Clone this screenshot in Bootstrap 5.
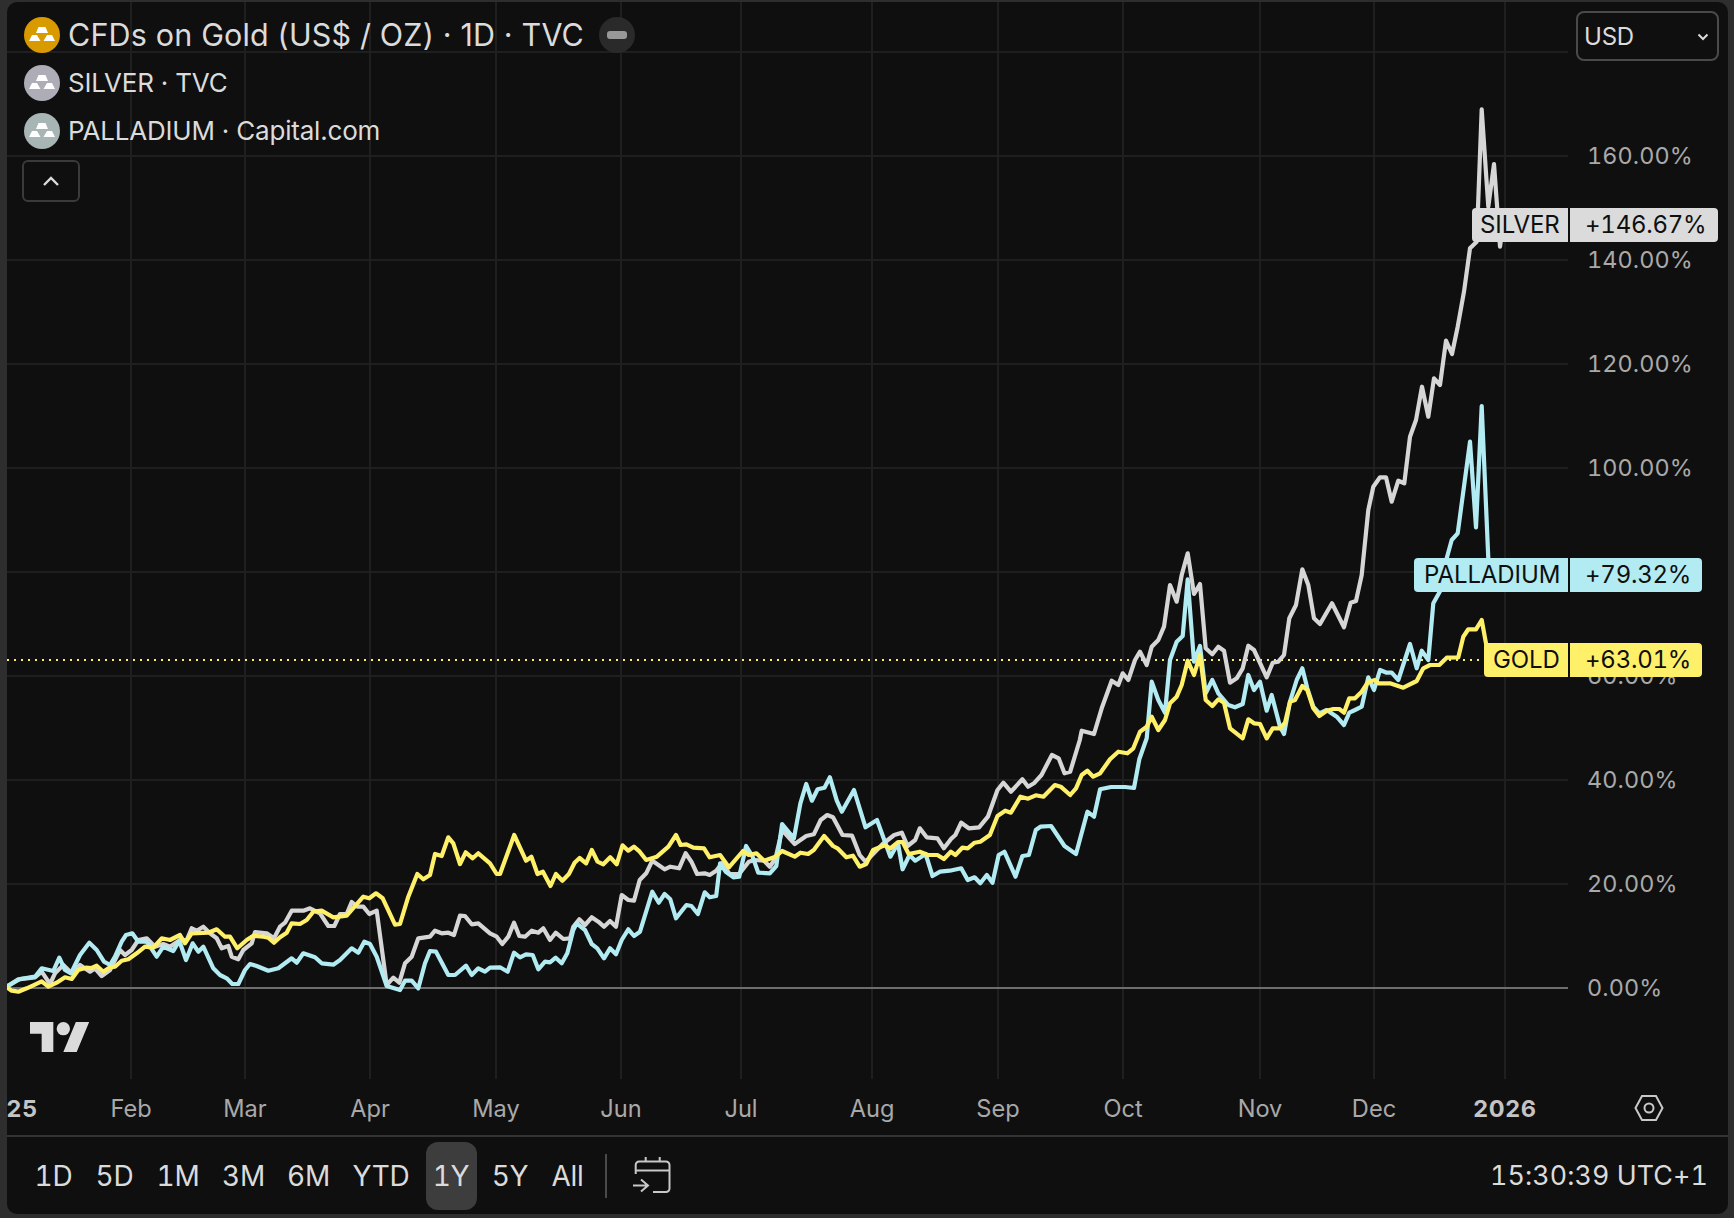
<!DOCTYPE html>
<html lang="en" data-bs-theme="dark">
<head>
<meta charset="utf-8">
<title>CFDs on Gold</title>
<link href="https://cdn.jsdelivr.net/npm/bootstrap@5.3.0/dist/css/bootstrap.min.css" rel="stylesheet">
<style>
html,body{height:1218px;overflow:hidden;}
body{background:#2e2e2e;padding:2px 6px 4px 7px;font-family:Inter,"Liberation Sans",sans-serif;color:#dbdbdb;}
.tv-panel{background:#0f0f0f;border-radius:10px;height:1212px;overflow:hidden;position:relative;}
.tv-chart{height:1077px;position:relative;}
.tv-svg{position:absolute;left:0;top:0;display:block;}
.tv-legend{position:absolute;left:17px;top:9px;}
.tv-row{height:48px;font-size:26px;letter-spacing:-.2px;gap:8px;line-height:1;white-space:nowrap;}
.tv-row-main{font-size:30.5px;letter-spacing:.16px;}
.tv-minus{width:36px;height:36px;border-radius:50%;background:#2a2a2a;margin-left:7px;}
.tv-minus i{display:block;width:20px;height:8px;border-radius:3px;background:#999;}
.tv-collapse{width:58px;height:42px;margin-top:5px;margin-left:-2px;padding:0;border:2px solid #3a3a3a;border-radius:6px;background:transparent;}
.tv-usd{position:absolute;left:1569px;top:9px;width:143px;height:50px;border:2px solid #4a4a4a;border-radius:8px;background:#0f0f0f;color:#dbdbdb;font-size:24px;padding:2px 8px 0 6px;letter-spacing:-.2px;}
.tv-ylab{position:absolute;left:1580px;font-size:23.4px;line-height:30px;color:#a9a9a9;transform:translateY(-50%);letter-spacing:.1px;font-variant-numeric:tabular-nums;}
.tv-tag{position:absolute;height:34px;display:flex;gap:2px;font-size:24px;line-height:34px;color:#0f0f0f;}
.tv-tag span{display:block;white-space:nowrap;letter-spacing:-.1px;}
.tv-tag .tv-tagl{border-radius:4px 0 0 4px;width:var(--l);padding-left:var(--p);text-align:left;}
.tv-tag .tv-tagv{border-radius:0 4px 4px 0;width:var(--v);padding-left:15px;text-align:left;letter-spacing:-.25px;font-variant-numeric:tabular-nums;}
.tv-axis{height:58px;position:relative;border-bottom:2px solid #333;}
.tv-tick{position:absolute;top:15px;font-size:23.6px;line-height:30px;color:#a9a9a9;transform:translateX(-50%);}
.tv-year{font-weight:700;font-size:23.5px;color:#c4c4c4;letter-spacing:.7px;}
.tv-hex{position:absolute;left:1627px;top:15px;}
.tv-tools{height:77px;padding-left:20.5px;padding-right:20px;gap:7px;}
.tv-range{font-size:28px;letter-spacing:-.3px;line-height:1;height:68px;padding:0;border:0;border-radius:12px;color:#dbdbdb;background:transparent;--bs-btn-hover-color:#dbdbdb;font-variant-numeric:tabular-nums;}
.tv-range.active,.tv-range.active:hover{background:#3d3d3d;color:#dbdbdb;}
.tv-range:nth-child(1){width:52px;}
.tv-range:nth-child(2){width:56px;}
.tv-range:nth-child(3){width:57px;}
.tv-range:nth-child(4){width:60px;}
.tv-range:nth-child(5){width:56px;}
.tv-range:nth-child(6){width:75px;}
.tv-range:nth-child(7){width:51px;}
.tv-range:nth-child(8){width:53px;}
.tv-range:nth-child(9){width:48px;}
.tv-sep{width:2px;height:44px;background:#4a4a4a;margin-left:6.5px;}
.tv-cal{margin-left:9px;}
.tv-clock{font-size:26.8px;letter-spacing:.1px;font-variant-numeric:tabular-nums;}
</style>
</head>
<body>
<div class="tv-panel d-flex flex-column">
  <div class="tv-chart">
    <svg class="tv-svg" id="plot" width="1721" height="1077" viewBox="7 2 1721 1077" xmlns="http://www.w3.org/2000/svg">
      <g stroke="#1f1f1f" stroke-width="2">
        <path d="M7 52H1568M7 156H1568M7 260H1568M7 364H1568M7 468H1568M7 572H1568M7 676H1568M7 780H1568M7 884H1568"/>
        <path d="M131 2V1079M245 2V1079M370 2V1079M496 2V1079M621 2V1079M741 2V1079M872 2V1079M998 2V1079M1123 2V1079M1260 2V1079M1374 2V1079M1505 2V1079"/>
      </g>
      <path d="M7 988H1568" stroke="#6e6e6e" stroke-width="2"/>
      <path d="M7 660H1490" stroke="#fff06a" stroke-width="2" stroke-dasharray="2 5"/>
    </svg>

    <div class="tv-ylab" style="top:154px">160.00%</div>
    <div class="tv-ylab" style="top:258px">140.00%</div>
    <div class="tv-ylab" style="top:362px">120.00%</div>
    <div class="tv-ylab" style="top:466px">100.00%</div>
    <div class="tv-ylab" style="top:674px">60.00%</div>
    <div class="tv-ylab" style="top:778px">40.00%</div>
    <div class="tv-ylab" style="top:882px">20.00%</div>
    <div class="tv-ylab" style="top:986px">0.00%</div>

    <div class="tv-tag" style="left:1465px;top:206px;--l:96px;--v:148px;--p:8px"><span class="tv-tagl" style="background:#dbdbdb">SILVER</span><span class="tv-tagv" style="background:#dbdbdb">+146.67%</span></div>
    <div class="tv-tag" style="left:1407px;top:556px;--l:154px;--v:132px;--p:10px"><span class="tv-tagl" style="background:#b2ebf2">PALLADIUM</span><span class="tv-tagv" style="background:#b2ebf2">+79.32%</span></div>
    <div class="tv-tag" style="left:1477px;top:641px;--l:84px;--v:132px;--p:9px"><span class="tv-tagl" style="background:#fff06a">GOLD</span><span class="tv-tagv" style="background:#fff06a">+63.01%</span></div>

    <div class="tv-legend">
      <div class="tv-row tv-row-main d-flex align-items-center">
        <svg width="36" height="36" viewBox="0 0 36 36"><circle cx="18" cy="18" r="18" fill="#d99a00"/><path fill="#fff" d="M14.5 10h7L24 16H12zM8 18h5l3.5 6H5zM23 18h5l3 6H19.5z"/></svg>
        <span>CFDs on Gold (US$ / OZ) · 1D · TVC</span>
        <span class="tv-minus d-flex align-items-center justify-content-center"><i></i></span>
      </div>
      <div class="tv-row d-flex align-items-center">
        <svg width="36" height="36" viewBox="0 0 36 36"><circle cx="18" cy="18" r="18" fill="#adadb8"/><path fill="#fff" d="M14.5 10h7L24 16H12zM8 18h5l3.5 6H5zM23 18h5l3 6H19.5z"/></svg>
        <span>SILVER · TVC</span>
      </div>
      <div class="tv-row d-flex align-items-center">
        <svg width="36" height="36" viewBox="0 0 36 36"><circle cx="18" cy="18" r="18" fill="#a8b5b5"/><path fill="#fff" d="M14.5 10h7L24 16H12zM8 18h5l3.5 6H5zM23 18h5l3 6H19.5z"/></svg>
        <span>PALLADIUM · Capital.com</span>
      </div>
      <button type="button" class="tv-collapse btn d-flex align-items-center justify-content-center" aria-label="Collapse">
        <svg width="18" height="12" viewBox="0 0 18 12"><path d="M2 10l7-7 7 7" fill="none" stroke="#dbdbdb" stroke-width="2.4"/></svg>
      </button>
    </div>

    <button type="button" class="tv-usd btn d-flex align-items-center justify-content-between">
      <span>USD</span>
      <svg width="12" height="8" viewBox="0 0 12 8"><path d="M1.5 1.5L6 6l4.5-4.5" fill="none" stroke="#dbdbdb" stroke-width="2"/></svg>
    </button>

    <svg class="tv-svg" style="left:23px;top:1020px" width="60" height="30" viewBox="0 4 36 18" xmlns="http://www.w3.org/2000/svg"><path fill="#dbdbdb" d="M14 22H7V11H0V4h14v18zM28 22h-8l7.500-18h8L28 22z"/><circle fill="#dbdbdb" cx="20" cy="8" r="4"/></svg>
  </div>

  <div class="tv-axis">
    <div class="tv-tick tv-year" style="left:15px">25</div>
    <div class="tv-tick" style="left:124px">Feb</div>
    <div class="tv-tick" style="left:238px">Mar</div>
    <div class="tv-tick" style="left:363px">Apr</div>
    <div class="tv-tick" style="left:489px">May</div>
    <div class="tv-tick" style="left:614px">Jun</div>
    <div class="tv-tick" style="left:734px">Jul</div>
    <div class="tv-tick" style="left:865px">Aug</div>
    <div class="tv-tick" style="left:991px">Sep</div>
    <div class="tv-tick" style="left:1116px">Oct</div>
    <div class="tv-tick" style="left:1253px">Nov</div>
    <div class="tv-tick" style="left:1367px">Dec</div>
    <div class="tv-tick tv-year" style="left:1498px">2026</div>
    <svg class="tv-hex" width="30" height="28" viewBox="0 0 30 28"><path d="M1.500 14L8 2h14l6.500 12L22 26H8z" fill="none" stroke="#c8c8c8" stroke-width="2"/><circle cx="15" cy="14" r="4.500" fill="none" stroke="#c8c8c8" stroke-width="2"/></svg>
  </div>

  <div class="tv-tools d-flex align-items-center">
    <button type="button" class="btn tv-range">1D</button>
    <button type="button" class="btn tv-range">5D</button>
    <button type="button" class="btn tv-range">1M</button>
    <button type="button" class="btn tv-range">3M</button>
    <button type="button" class="btn tv-range">6M</button>
    <button type="button" class="btn tv-range">YTD</button>
    <button type="button" class="btn tv-range active">1Y</button>
    <button type="button" class="btn tv-range">5Y</button>
    <button type="button" class="btn tv-range">All</button>
    <div class="tv-sep"></div>
    <svg class="tv-cal" width="56" height="50" viewBox="0 0 56 50"><path fill="none" stroke="#c8c8c8" stroke-width="2" d="M12.700 23V14a3.500 3.500 0 0 1 3.500-3.500H43a3.500 3.500 0 0 1 3.500 3.500V37.500A3.500 3.500 0 0 1 43 41H30M12.700 19.500H46.500M22.700 6V10.500M36.700 6V10.500M10 34.500H25M18 28.500L25 34.500L18 40.500"/></svg>
    <div class="tv-clock ms-auto">15:30:39 UTC+1</div>
  </div>
</div>
<script>
var Z6=[0,800,1/3,1/3],Z7=[500,740,1/2.613,1/3],Z8=[1050,520,1/3,1/3],Z9=[1300,90,1/3,1/3],Z3=[1380,540,1/3,1/3],Z10=[490,860,1/3,1/3],P=[0,0,1,1];
var series=[
{c:"#d6d6d6",d:[
[Z6,"20,560 55,538 105,532 125,515 150,552 165,520 190,495 215,520 240,495 270,515 285,505 305,528 330,510 360,450 375,465 395,450 415,420 440,415 465,440 490,432 510,440 540,420 560,420 575,385 590,392 610,380 630,400 650,415 665,445 685,438 695,470 715,478 730,450 755,430 765,396 800,400 822,415 840,380 855,368 875,332 910,332 930,325 960,340 985,378 1003,378 1020,342 1040,342 1055,306 1072,320 1090,320 1108,342 1130,332 1160,555 1180,533 1198,548 1215,490 1235,470 1255,415 1290,410 1305,392 1325,400 1345,398 1362,405 1380,347 1395,348 1415,373 1435,370 1470,400"],
[Z10,"0,220 20,230 37,252 55,230 72,188 88,228 105,230 125,212 145,218 160,205 180,240 197,218 220,237 240,235 250,200 268,178 285,195 305,172 325,185 342,200 360,183 378,200 395,105 415,120 432,122"],
[Z7,"365,420 382,400 398,362 430,388 445,380 468,385 485,340 500,365 515,402 535,400 548,405 565,392 580,370 600,402 625,402 650,365 665,360 690,362 705,380 720,355 737,270 770,312 800,288 820,283 838,240 855,225 870,232 895,285 920,287 940,345 955,365 1000,312 1030,285 1050,278 1065,318 1085,300 1097,265 1115,292 1143,295 1160,325 1180,295 1190,285 1205,248 1225,265 1252,262 1275,230 1300,150 1315,128 1335,155 1365,118 1380,140 1395,130 1415,105 1442,45 1460,55 1475,100 1490,95 1515,0"],
[Z8,"95,632 132,642 155,565 185,482 205,495 218,460 235,480 255,420 270,395 290,435 305,380 325,360 342,320 360,195 380,245 395,165 413,100 432,222 450,192 467,385 487,403 505,380 522,392 540,488 560,475 578,445 595,377 612,390 650,472 668,428 685,425 702,405 718,295 738,255 757,148 775,195 792,295 810,312 846,250 882,322 902,248 918,243 935,165"],
[Z9,"205,1260 220,1190 240,1162 258,1162 275,1235 295,1172 313,1180 330,1040 348,990 366,890 385,980 402,865 420,885 438,752 456,792 473,710 492,605 510,475 530,455 545,58 565,350 582,222 600,470"],
[P,"1503,225"]]},
{c:"#b2ebf2",d:[
[Z6,"20,560 60,537 105,530 125,505 160,513 178,473 195,510 213,520 240,465 268,428 290,450 312,485 330,495 345,470 365,425 378,405 397,400 415,425 440,425 470,470 490,440 520,453 538,422 558,480 578,430 595,455 610,440 640,505 660,525 680,535 697,552 715,552 735,510 750,492 770,498 805,512 835,505 875,475 890,488 910,460 945,472 965,490 1000,494 1020,480 1055,445 1075,458 1093,425 1110,432 1130,470 1160,558 1200,570 1215,542 1235,542 1255,565 1275,490 1290,453 1308,455 1345,525 1365,525 1398,497 1415,525 1435,505 1455,515 1470,503"],
[Z10,"0,323 30,322 53,335 72,278 90,292 108,283 128,285 145,328 165,305 180,307 197,293 215,310 232,280 250,210 260,190 285,210 305,252 322,265 342,295 360,265 378,283 395,240 415,208 432,228 450,215"],
[Z7,"398,455 415,488 430,462 445,478 460,535 487,495 500,498 517,522 535,457 548,472 565,468 575,370 590,395 610,412 625,410 643,318 660,350 675,398 705,400 722,378 737,252 768,295 785,190 800,132 815,182 830,148 848,143 862,112 880,182 893,215 925,150 955,262 985,240 1020,350 1040,310 1052,388 1070,345 1085,362 1112,342 1130,408 1150,395 1175,392 1205,385 1222,420 1240,412 1255,430 1272,405 1287,428 1303,345 1318,335 1347,410 1365,348 1382,345 1400,270 1412,260 1440,258 1475,318 1505,342 1535,215 1552,230 1568,148"],
[P,"1111,787 1125,787 1134,788"],
[Z8,"268,718 290,655 305,485 325,540 345,578 360,420 380,365 398,348 413,178 432,425 450,378 467,520 487,480 505,520 535,555 555,562 578,552 595,465 612,510 630,485 650,572 665,525 690,620 702,642 720,545 740,480 757,445 772,505 790,560 808,580 830,570 860,590 882,615 898,578 915,570 935,560 955,472 972,510 990,450 1010,458 1025,458 1045,480 1080,372 1100,445 1115,392 1135,420 1150,250 1175,205"],
[Z9,"440,1405 455,1350 473,1330 510,1055 528,1312 545,948 565,1405"],
[P,"1490,575"]]},
{c:"#fff06a",d:[
[Z6,"20,562 35,572 55,575 80,565 100,556 125,544 145,560 170,548 195,532 215,537 235,510 258,503 275,504 290,497 310,515 330,502 345,500 365,482 385,478 410,460 435,440 460,443 485,415 510,420 540,405 555,430 575,400 625,398 650,388 675,410 690,410 712,445 740,420 760,407 790,410 805,413 822,428 840,412 860,398 875,370 900,372 920,360 940,335 965,332 1000,352 1040,347 1090,290 1108,295 1128,280 1148,295 1185,374 1200,372 1225,290 1252,222 1270,238 1290,225 1305,162 1325,168 1345,112 1360,130 1380,192 1397,157 1418,175 1435,160 1470,190 1490,222"],
[Z7,"0,402 37,285 68,362 82,350 98,402 112,395 132,438 146,402 163,422 180,402 195,368 208,354 225,370 240,330 255,365 270,373 288,352 305,373 320,316 335,332 350,320 365,335 382,360 410,350 440,320 460,285 472,315 487,313 505,323 533,325 548,352 575,345 598,382 635,333 650,345 670,340 690,362 720,350 737,333 770,350 785,338 805,342 820,330 847,288 870,318 882,325 905,352 922,347 940,380 957,372 975,330 1005,316 1020,325 1040,306 1052,306 1068,342 1097,335 1118,345 1143,345 1160,357 1178,335 1190,345 1208,323 1222,325 1240,308 1255,305 1280,285 1300,228 1320,212 1335,218 1360,170 1380,176 1400,166 1420,170 1450,135 1465,140 1490,165 1505,145 1520,105 1535,92 1550,110 1568,100"],
[Z8,"180,718 205,695 232,700 250,685 270,635 290,620 305,590 325,630 345,600 360,550 380,530 395,495 413,422 432,465 450,405 467,540 487,558 505,538 522,548 540,625 578,655 595,598 612,610 630,612 650,655 668,625 690,625 705,608 720,545 735,540 757,498 772,510 790,565 808,588 830,572 850,567 868,567 882,578 898,535 915,535 935,515 955,485 975,480 985,490 1020,490 1060,503 1100,483 1120,445 1140,435 1168,435 1190,413"],
[Z3,"235,352 250,290 265,268 288,268 305,240 318,310"],
[P,"1488,660"]]}
];
var NS="http://www.w3.org/2000/svg",svg=document.getElementById("plot");
series.forEach(function(s){
  var pts=[];
  s.d.forEach(function(seg){
    var t=seg[0];
    seg[1].split(" ").forEach(function(p){
      var a=p.split(",");
      pts.push((t[0]+a[0]*t[2]).toFixed(1)+","+(t[1]+a[1]*t[3]).toFixed(1));
    });
  });
  var el=document.createElementNS(NS,"polyline");
  el.setAttribute("points",pts.join(" "));
  el.setAttribute("fill","none");
  el.setAttribute("stroke",s.c);
  el.setAttribute("stroke-width","4.2");
  el.setAttribute("stroke-linejoin","round");
  svg.appendChild(el);
});
</script>
</body>
</html>
